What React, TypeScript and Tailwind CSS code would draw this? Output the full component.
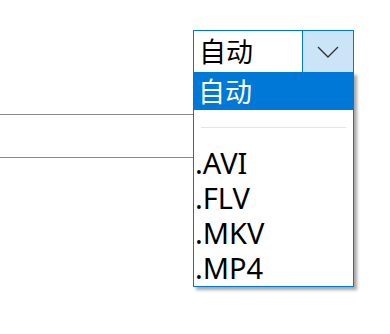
const items = [".AVI", ".FLV", ".MKV", ".MP4"];

const fontStack = {
  cjk: "font-['Noto_Sans','Noto_Sans_CJK_SC',sans-serif]",
};

export default function App() {
  return (
    <div className={`relative w-[390px] h-[334px] bg-white overflow-hidden ${fontStack.cjk}`}>
      {/* combo box */}
      <div className="pt-[30px] pl-[193px]">
        <div className="flex w-[161px] h-[43px] border border-[#0078d7] bg-white">
          <div className="flex-1 flex items-center pl-[5px] text-[27px] leading-none text-black">
            自动
          </div>
          <div className="w-[51px] flex items-center justify-center border-l border-[#0078d7] bg-[#cce4f7]">
            <svg width="22" height="12" viewBox="0 0 22 12" fill="none">
              <path d="M1 1 L11 11 L21 1" stroke="#333" strokeWidth="1.4" />
            </svg>
          </div>
        </div>
      </div>

      {/* lines behind */}
      <div className="mt-[41px] w-[193px] border-t border-[#8a8a8a]" />
      <div className="mt-[42px] w-[193px] border-t border-[#8a8a8a]" />

      {/* dropdown list */}
      <div className="absolute left-[193px] top-[72px] w-[161px] border border-[#0078d7] bg-white shadow-[3px_3px_3px_rgba(0,0,0,0.35)]">
        <div className="h-[37px] flex items-center pl-[4px] bg-[#0078d7] text-white text-[27px] leading-[37px]">
          自动
        </div>
        <div className="h-[35px] flex items-center px-[7px]">
          <div className="w-full border-t border-[#e5e5e5]" />
        </div>
        {items.map((it) => (
          <div key={it} className="h-[35px] pl-[1px] text-[29px] leading-[35px] text-black">
            {it}
          </div>
        ))}
        <div className="h-[1px]" />
      </div>
    </div>
  );
}
